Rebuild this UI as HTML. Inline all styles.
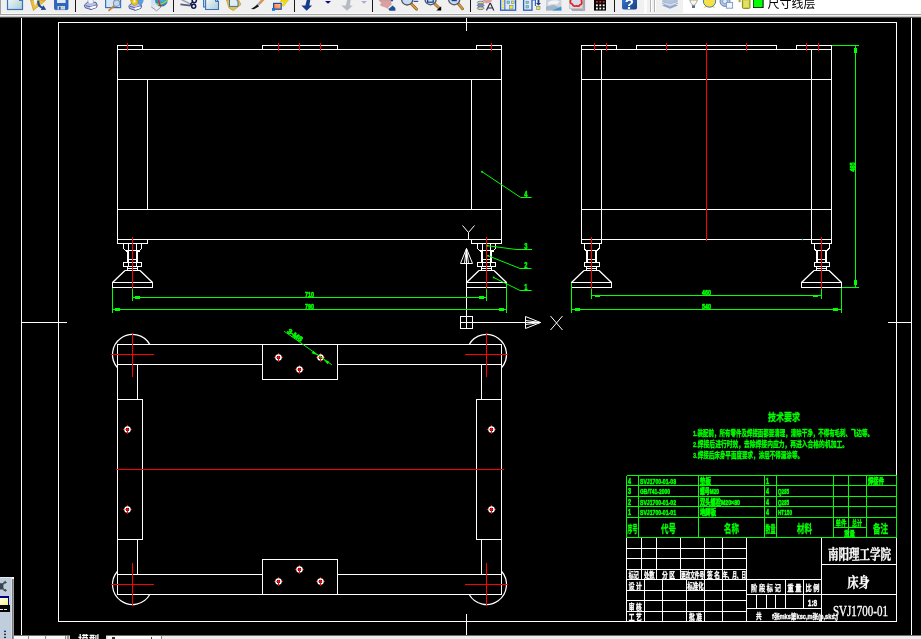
<!DOCTYPE html>
<html lang="zh-CN"><head><meta charset="utf-8"><title>床身 SVJ1700-01</title>
<style>
html,body{margin:0;padding:0;background:#000;overflow:hidden}
body{width:921px;height:639px;position:relative;font-family:"Liberation Sans","Noto Sans CJK SC",sans-serif}
svg{position:absolute;left:0;top:0;display:block}
text{white-space:pre}
</style></head><body>
<svg width="921" height="639" viewBox="0 0 921 639">
<rect width="921" height="639" fill="#000"/>
<g shape-rendering="crispEdges" fill="none">
<line x1="21.5" y1="18" x2="21.5" y2="635" stroke="#fff" stroke-width="1" />
<line x1="911.5" y1="18" x2="911.5" y2="635" stroke="#fff" stroke-width="1" />
<line x1="466.5" y1="18" x2="466.5" y2="31" stroke="#fff" stroke-width="1" />
<line x1="466.5" y1="614" x2="466.5" y2="635" stroke="#fff" stroke-width="1" />
<line x1="21.5" y1="322.5" x2="67" y2="322.5" stroke="#fff" stroke-width="1" />
<line x1="888" y1="322.5" x2="911.5" y2="322.5" stroke="#fff" stroke-width="1" />
<rect x="58.5" y="22.5" width="838.0" height="599.0" stroke="#fff" fill="none"/>
<rect x="117.5" y="49.5" width="384.0" height="190.0" stroke="#fff" fill="none"/>
<line x1="117.5" y1="79.5" x2="501.5" y2="79.5" stroke="#fff" stroke-width="1" />
<line x1="117.5" y1="209.5" x2="501.5" y2="209.5" stroke="#fff" stroke-width="1" />
<line x1="147.5" y1="79.5" x2="147.5" y2="209.5" stroke="#fff" stroke-width="1" />
<line x1="471.5" y1="79.5" x2="471.5" y2="209.5" stroke="#fff" stroke-width="1" />
<polyline points="117.5,49.5 117.5,45.5 142.5,45.5 142.5,49.5" stroke="#fff" fill="none" />
<polyline points="262.5,49.5 262.5,45.5 337.5,45.5 337.5,49.5" stroke="#fff" fill="none" />
<polyline points="476.5,49.5 476.5,45.5 501.5,45.5 501.5,49.5" stroke="#fff" fill="none" />
<line x1="127.5" y1="43" x2="127.5" y2="51" stroke="#f00" stroke-width="1" />
<line x1="278.5" y1="43" x2="278.5" y2="51" stroke="#f00" stroke-width="1" />
<line x1="299.5" y1="43" x2="299.5" y2="51" stroke="#f00" stroke-width="1" />
<line x1="320.5" y1="43" x2="320.5" y2="51" stroke="#f00" stroke-width="1" />
<line x1="491.5" y1="43" x2="491.5" y2="51" stroke="#f00" stroke-width="1" />
<rect x="117.5" y="239.5" width="30.0" height="4.0" stroke="#fff" fill="none"/>
<rect x="471.5" y="239.5" width="30.0" height="4.0" stroke="#fff" fill="none"/>
<polyline points="123.5,243.5 123.5,248.5 125.5,250.5 139.5,250.5 141.5,248.5 141.5,243.5" stroke="#fff" fill="none" />
<line x1="125.5" y1="251.5" x2="128.5" y2="251.5" stroke="#fff" stroke-width="1" />
<line x1="136.5" y1="251.5" x2="139.5" y2="251.5" stroke="#fff" stroke-width="1" />
<line x1="128.5" y1="243.5" x2="128.5" y2="250.5" stroke="#fff" stroke-width="1" />
<line x1="136.5" y1="243.5" x2="136.5" y2="250.5" stroke="#fff" stroke-width="1" />
<line x1="127.5" y1="250.5" x2="127.5" y2="262.5" stroke="#fff" stroke-width="1" />
<line x1="137.5" y1="250.5" x2="137.5" y2="262.5" stroke="#fff" stroke-width="1" />
<line x1="128.5" y1="250.5" x2="128.5" y2="262.5" stroke="#fff" stroke-width="1" />
<line x1="136.5" y1="250.5" x2="136.5" y2="262.5" stroke="#fff" stroke-width="1" />
<line x1="127.5" y1="259.5" x2="137.5" y2="259.5" stroke="#fff" stroke-width="1" />
<rect x="123.5" y="262.5" width="18.0" height="4.0" stroke="#fff" fill="none"/>
<line x1="128.5" y1="262.5" x2="128.5" y2="266.5" stroke="#fff" stroke-width="1" />
<line x1="136.5" y1="262.5" x2="136.5" y2="266.5" stroke="#fff" stroke-width="1" />
<line x1="127.5" y1="266.5" x2="127.5" y2="270.5" stroke="#fff" stroke-width="1" />
<line x1="137.5" y1="266.5" x2="137.5" y2="270.5" stroke="#fff" stroke-width="1" />
<line x1="127.5" y1="268.5" x2="137.5" y2="268.5" stroke="#fff" stroke-width="1" />
<line x1="125.0" y1="270.5" x2="140.0" y2="270.5" stroke="#fff" stroke-width="1" />
<rect x="112.5" y="282.5" width="40.0" height="5.0" stroke="#fff" fill="none"/>
<polyline points="477.5,243.5 477.5,248.5 479.5,250.5 493.5,250.5 495.5,248.5 495.5,243.5" stroke="#fff" fill="none" />
<line x1="479.5" y1="251.5" x2="482.5" y2="251.5" stroke="#fff" stroke-width="1" />
<line x1="490.5" y1="251.5" x2="493.5" y2="251.5" stroke="#fff" stroke-width="1" />
<line x1="482.5" y1="243.5" x2="482.5" y2="250.5" stroke="#fff" stroke-width="1" />
<line x1="490.5" y1="243.5" x2="490.5" y2="250.5" stroke="#fff" stroke-width="1" />
<line x1="481.5" y1="250.5" x2="481.5" y2="262.5" stroke="#fff" stroke-width="1" />
<line x1="491.5" y1="250.5" x2="491.5" y2="262.5" stroke="#fff" stroke-width="1" />
<line x1="482.5" y1="250.5" x2="482.5" y2="262.5" stroke="#fff" stroke-width="1" />
<line x1="490.5" y1="250.5" x2="490.5" y2="262.5" stroke="#fff" stroke-width="1" />
<line x1="481.5" y1="259.5" x2="491.5" y2="259.5" stroke="#fff" stroke-width="1" />
<rect x="477.5" y="262.5" width="18.0" height="4.0" stroke="#fff" fill="none"/>
<line x1="482.5" y1="262.5" x2="482.5" y2="266.5" stroke="#fff" stroke-width="1" />
<line x1="490.5" y1="262.5" x2="490.5" y2="266.5" stroke="#fff" stroke-width="1" />
<line x1="481.5" y1="266.5" x2="481.5" y2="270.5" stroke="#fff" stroke-width="1" />
<line x1="491.5" y1="266.5" x2="491.5" y2="270.5" stroke="#fff" stroke-width="1" />
<line x1="481.5" y1="268.5" x2="491.5" y2="268.5" stroke="#fff" stroke-width="1" />
<line x1="479.0" y1="270.5" x2="494.0" y2="270.5" stroke="#fff" stroke-width="1" />
<rect x="466.5" y="282.5" width="40.0" height="5.0" stroke="#fff" fill="none"/>
<rect x="581.5" y="49.5" width="250.0" height="190.0" stroke="#fff" fill="none"/>
<line x1="581.5" y1="79.5" x2="831.5" y2="79.5" stroke="#fff" stroke-width="1" />
<line x1="581.5" y1="209.5" x2="831.5" y2="209.5" stroke="#fff" stroke-width="1" />
<line x1="601.5" y1="49.5" x2="601.5" y2="239.5" stroke="#fff" stroke-width="1" />
<line x1="811.5" y1="49.5" x2="811.5" y2="239.5" stroke="#fff" stroke-width="1" />
<polyline points="581.5,49.5 581.5,45.5 616.5,45.5 616.5,49.5" stroke="#fff" fill="none" />
<polyline points="636.5,49.5 636.5,45.5 776.5,45.5 776.5,49.5" stroke="#fff" fill="none" />
<polyline points="796.5,49.5 796.5,45.5 831.5,45.5 831.5,49.5" stroke="#fff" fill="none" />
<line x1="594.5" y1="43" x2="594.5" y2="51" stroke="#f00" stroke-width="1" />
<line x1="606.5" y1="43" x2="606.5" y2="51" stroke="#f00" stroke-width="1" />
<line x1="666.5" y1="43" x2="666.5" y2="51" stroke="#f00" stroke-width="1" />
<line x1="746.5" y1="43" x2="746.5" y2="51" stroke="#f00" stroke-width="1" />
<line x1="806.5" y1="43" x2="806.5" y2="51" stroke="#f00" stroke-width="1" />
<line x1="818.5" y1="43" x2="818.5" y2="51" stroke="#f00" stroke-width="1" />
<line x1="706.5" y1="43" x2="706.5" y2="241" stroke="#f00" stroke-width="1" />
<rect x="581.5" y="239.5" width="20.0" height="4.0" stroke="#fff" fill="none"/>
<rect x="811.5" y="239.5" width="20.0" height="4.0" stroke="#fff" fill="none"/>
<polyline points="584.0,243.5 584.0,248.5 586.0,250.5 597.0,250.5 599.0,248.5 599.0,243.5" stroke="#fff" fill="none" />
<line x1="586.0" y1="251.5" x2="587.5" y2="251.5" stroke="#fff" stroke-width="1" />
<line x1="595.5" y1="251.5" x2="597.0" y2="251.5" stroke="#fff" stroke-width="1" />
<line x1="586.5" y1="250.5" x2="586.5" y2="262.5" stroke="#fff" stroke-width="1" />
<line x1="596.5" y1="250.5" x2="596.5" y2="262.5" stroke="#fff" stroke-width="1" />
<line x1="587.5" y1="250.5" x2="587.5" y2="262.5" stroke="#fff" stroke-width="1" />
<line x1="595.5" y1="250.5" x2="595.5" y2="262.5" stroke="#fff" stroke-width="1" />
<line x1="586.5" y1="259.5" x2="596.5" y2="259.5" stroke="#fff" stroke-width="1" />
<rect x="584.0" y="262.5" width="15.0" height="4.0" stroke="#fff" fill="none"/>
<line x1="586.5" y1="266.5" x2="586.5" y2="270.5" stroke="#fff" stroke-width="1" />
<line x1="596.5" y1="266.5" x2="596.5" y2="270.5" stroke="#fff" stroke-width="1" />
<line x1="586.5" y1="268.5" x2="596.5" y2="268.5" stroke="#fff" stroke-width="1" />
<line x1="584.0" y1="270.5" x2="599.0" y2="270.5" stroke="#fff" stroke-width="1" />
<rect x="571.5" y="282.5" width="40.0" height="5.0" stroke="#fff" fill="none"/>
<polyline points="814.0,243.5 814.0,248.5 816.0,250.5 827.0,250.5 829.0,248.5 829.0,243.5" stroke="#fff" fill="none" />
<line x1="816.0" y1="251.5" x2="817.5" y2="251.5" stroke="#fff" stroke-width="1" />
<line x1="825.5" y1="251.5" x2="827.0" y2="251.5" stroke="#fff" stroke-width="1" />
<line x1="816.5" y1="250.5" x2="816.5" y2="262.5" stroke="#fff" stroke-width="1" />
<line x1="826.5" y1="250.5" x2="826.5" y2="262.5" stroke="#fff" stroke-width="1" />
<line x1="817.5" y1="250.5" x2="817.5" y2="262.5" stroke="#fff" stroke-width="1" />
<line x1="825.5" y1="250.5" x2="825.5" y2="262.5" stroke="#fff" stroke-width="1" />
<line x1="816.5" y1="259.5" x2="826.5" y2="259.5" stroke="#fff" stroke-width="1" />
<rect x="814.0" y="262.5" width="15.0" height="4.0" stroke="#fff" fill="none"/>
<line x1="816.5" y1="266.5" x2="816.5" y2="270.5" stroke="#fff" stroke-width="1" />
<line x1="826.5" y1="266.5" x2="826.5" y2="270.5" stroke="#fff" stroke-width="1" />
<line x1="816.5" y1="268.5" x2="826.5" y2="268.5" stroke="#fff" stroke-width="1" />
<line x1="814.0" y1="270.5" x2="829.0" y2="270.5" stroke="#fff" stroke-width="1" />
<rect x="801.5" y="282.5" width="40.0" height="5.0" stroke="#fff" fill="none"/>
<line x1="132.5" y1="237" x2="132.5" y2="289" stroke="#f00" stroke-width="1" />
<line x1="486.5" y1="237" x2="486.5" y2="289" stroke="#f00" stroke-width="1" />
<line x1="591.5" y1="237" x2="591.5" y2="289" stroke="#f00" stroke-width="1" />
<line x1="821.5" y1="237" x2="821.5" y2="289" stroke="#f00" stroke-width="1" />
<rect x="117.5" y="344.5" width="384.0" height="250.0" stroke="#fff" fill="none"/>
<line x1="117.5" y1="364.5" x2="262.5" y2="364.5" stroke="#fff" stroke-width="1" />
<line x1="117.5" y1="574.5" x2="262.5" y2="574.5" stroke="#fff" stroke-width="1" />
<line x1="337.5" y1="364.5" x2="501.5" y2="364.5" stroke="#fff" stroke-width="1" />
<line x1="337.5" y1="574.5" x2="501.5" y2="574.5" stroke="#fff" stroke-width="1" />
<line x1="137.5" y1="364.5" x2="137.5" y2="399.5" stroke="#fff" stroke-width="1" />
<line x1="481.5" y1="364.5" x2="481.5" y2="399.5" stroke="#fff" stroke-width="1" />
<line x1="137.5" y1="539.5" x2="137.5" y2="574.5" stroke="#fff" stroke-width="1" />
<line x1="481.5" y1="539.5" x2="481.5" y2="574.5" stroke="#fff" stroke-width="1" />
<rect x="262.5" y="344.5" width="75.0" height="35.0" stroke="#fff" fill="none"/>
<rect x="262.5" y="559.5" width="75.0" height="35.0" stroke="#fff" fill="none"/>
<rect x="117.5" y="399.5" width="25.0" height="140.0" stroke="#fff" fill="none"/>
<rect x="476.5" y="399.5" width="25.0" height="140.0" stroke="#fff" fill="none"/>
<line x1="116" y1="469.5" x2="504" y2="469.5" stroke="#f00" stroke-width="1" />
</g>
<g fill="none" stroke="#fff" stroke-width="1">
<path d="M125.0 270.5L112.5 282.5M140.0 270.5L152.5 282.5" stroke-width="1.3"/>
<path d="M479.0 270.5L466.5 282.5M494.0 270.5L506.5 282.5" stroke-width="1.3"/>
<path d="M584.0 270.5L571.5 282.5M599.0 270.5L611.5 282.5" stroke-width="1.3"/>
<path d="M814.0 270.5L801.5 282.5M829.0 270.5L841.5 282.5" stroke-width="1.3"/>
<path d="M149.82 344.50A20 20 0 1 0 117.50 367.73" stroke-width="1.25"/>
<path d="M469.18 344.50A20 20 0 1 1 501.50 367.73" stroke-width="1.25"/>
<path d="M149.82 594.50A20 20 0 1 1 117.50 571.27" stroke-width="1.25"/>
<path d="M469.18 594.50A20 20 0 1 0 501.50 571.27" stroke-width="1.25"/>
</g>
<g shape-rendering="crispEdges">
<line x1="274.0" y1="357.5" x2="283.0" y2="357.5" stroke="#f00" stroke-width="1" />
<line x1="278.5" y1="353.0" x2="278.5" y2="362.0" stroke="#f00" stroke-width="1" />
<line x1="295.0" y1="369.5" x2="304.0" y2="369.5" stroke="#f00" stroke-width="1" />
<line x1="299.5" y1="365.0" x2="299.5" y2="374.0" stroke="#f00" stroke-width="1" />
<line x1="316.0" y1="357.5" x2="325.0" y2="357.5" stroke="#f00" stroke-width="1" />
<line x1="320.5" y1="353.0" x2="320.5" y2="362.0" stroke="#f00" stroke-width="1" />
<line x1="274.0" y1="581.5" x2="283.0" y2="581.5" stroke="#f00" stroke-width="1" />
<line x1="278.5" y1="577.0" x2="278.5" y2="586.0" stroke="#f00" stroke-width="1" />
<line x1="295.0" y1="569.5" x2="304.0" y2="569.5" stroke="#f00" stroke-width="1" />
<line x1="299.5" y1="565.0" x2="299.5" y2="574.0" stroke="#f00" stroke-width="1" />
<line x1="316.0" y1="581.5" x2="325.0" y2="581.5" stroke="#f00" stroke-width="1" />
<line x1="320.5" y1="577.0" x2="320.5" y2="586.0" stroke="#f00" stroke-width="1" />
<line x1="123.0" y1="429.5" x2="132.0" y2="429.5" stroke="#f00" stroke-width="1" />
<line x1="127.5" y1="425.0" x2="127.5" y2="434.0" stroke="#f00" stroke-width="1" />
<line x1="123.0" y1="509.5" x2="132.0" y2="509.5" stroke="#f00" stroke-width="1" />
<line x1="127.5" y1="505.0" x2="127.5" y2="514.0" stroke="#f00" stroke-width="1" />
<line x1="487.0" y1="429.5" x2="496.0" y2="429.5" stroke="#f00" stroke-width="1" />
<line x1="491.5" y1="425.0" x2="491.5" y2="434.0" stroke="#f00" stroke-width="1" />
<line x1="487.0" y1="509.5" x2="496.0" y2="509.5" stroke="#f00" stroke-width="1" />
<line x1="491.5" y1="505.0" x2="491.5" y2="514.0" stroke="#f00" stroke-width="1" />
<line x1="111.0" y1="354.5" x2="154.0" y2="354.5" stroke="#f00" stroke-width="1" />
<line x1="132.5" y1="333.0" x2="132.5" y2="376.5" stroke="#f00" stroke-width="1" />
<line x1="465.0" y1="354.5" x2="508.0" y2="354.5" stroke="#f00" stroke-width="1" />
<line x1="486.5" y1="333.0" x2="486.5" y2="376.5" stroke="#f00" stroke-width="1" />
<line x1="111.0" y1="584.5" x2="154.0" y2="584.5" stroke="#f00" stroke-width="1" />
<line x1="132.5" y1="562.5" x2="132.5" y2="605.5" stroke="#f00" stroke-width="1" />
<line x1="465.0" y1="584.5" x2="508.0" y2="584.5" stroke="#f00" stroke-width="1" />
<line x1="486.5" y1="562.5" x2="486.5" y2="605.5" stroke="#f00" stroke-width="1" />
</g>
<g fill="none" stroke="#fff">
<circle cx="278.5" cy="357.5" r="2.5" stroke-width="1.5"/>
<rect x="278.0" y="357.0" width="1" height="5" fill="#f00" stroke="none"/><rect x="276.5" y="357.0" width="2.5" height="1" fill="#f00" stroke="none"/>
<circle cx="299.5" cy="369.5" r="2.5" stroke-width="1.5"/>
<rect x="299.0" y="369.0" width="1" height="5" fill="#f00" stroke="none"/><rect x="297.5" y="369.0" width="2.5" height="1" fill="#f00" stroke="none"/>
<circle cx="320.5" cy="357.5" r="2.5" stroke-width="1.5"/>
<rect x="320.0" y="357.0" width="1" height="5" fill="#f00" stroke="none"/><rect x="318.5" y="357.0" width="2.5" height="1" fill="#f00" stroke="none"/>
<circle cx="278.5" cy="581.5" r="2.5" stroke-width="1.5"/>
<rect x="278.0" y="581.0" width="1" height="5" fill="#f00" stroke="none"/><rect x="276.5" y="581.0" width="2.5" height="1" fill="#f00" stroke="none"/>
<circle cx="299.5" cy="569.5" r="2.5" stroke-width="1.5"/>
<rect x="299.0" y="569.0" width="1" height="5" fill="#f00" stroke="none"/><rect x="297.5" y="569.0" width="2.5" height="1" fill="#f00" stroke="none"/>
<circle cx="320.5" cy="581.5" r="2.5" stroke-width="1.5"/>
<rect x="320.0" y="581.0" width="1" height="5" fill="#f00" stroke="none"/><rect x="318.5" y="581.0" width="2.5" height="1" fill="#f00" stroke="none"/>
<circle cx="127.5" cy="429.5" r="2.5" stroke-width="1.5"/>
<rect x="127.0" y="429.0" width="1" height="5" fill="#f00" stroke="none"/><rect x="125.5" y="429.0" width="2.5" height="1" fill="#f00" stroke="none"/>
<circle cx="127.5" cy="509.5" r="2.5" stroke-width="1.5"/>
<rect x="127.0" y="509.0" width="1" height="5" fill="#f00" stroke="none"/><rect x="125.5" y="509.0" width="2.5" height="1" fill="#f00" stroke="none"/>
<circle cx="491.5" cy="429.5" r="2.5" stroke-width="1.5"/>
<rect x="491.0" y="429.0" width="1" height="5" fill="#f00" stroke="none"/><rect x="489.5" y="429.0" width="2.5" height="1" fill="#f00" stroke="none"/>
<circle cx="491.5" cy="509.5" r="2.5" stroke-width="1.5"/>
<rect x="491.0" y="509.0" width="1" height="5" fill="#f00" stroke="none"/><rect x="489.5" y="509.0" width="2.5" height="1" fill="#f00" stroke="none"/>
</g>
<g shape-rendering="crispEdges" fill="none">
<rect x="460.5" y="316.5" width="12.0" height="12.0" stroke="#fff" fill="none"/>
<line x1="466.5" y1="264" x2="466.5" y2="328.5" stroke="#fff" stroke-width="1" />
<line x1="460.5" y1="322.5" x2="526" y2="322.5" stroke="#fff" stroke-width="1" />
</g>
<g fill="none" stroke="#fff" stroke-width="1">
<path d="M466.5 248.5L460.5 263.5H472.5ZM466.5 248.5L464.5 263.5M466.5 248.5L468.5 263.5M466.5 249V263" />
<path d="M540.5 322.5L525.5 316.5V328.5ZM540.5 322.5L525.5 320.5M540.5 322.5L525.5 324.5M540 322.5H526"/>
<path d="M462.5 225.5L468.5 232.5L474.5 225.5M468.5 232.5V239"/>
<path d="M550.5 316L562.5 330M562.5 316L550.5 330"/>
</g>
<g shape-rendering="crispEdges" fill="none">
<line x1="132.5" y1="297.5" x2="486.5" y2="297.5" stroke="#0f0" stroke-width="1" />
<line x1="132.5" y1="289" x2="132.5" y2="301" stroke="#0f0" stroke-width="1" />
<line x1="486.5" y1="289" x2="486.5" y2="301" stroke="#0f0" stroke-width="1" />
<rect x="135" y="296.0" width="5" height="3" fill="#0f0"/>
<rect x="479" y="296.0" width="5" height="3" fill="#0f0"/>
<line x1="112.5" y1="309.5" x2="506.5" y2="309.5" stroke="#0f0" stroke-width="1" />
<line x1="112.5" y1="288" x2="112.5" y2="313" stroke="#0f0" stroke-width="1" />
<line x1="506.5" y1="282.5" x2="506.5" y2="313" stroke="#0f0" stroke-width="1" />
<rect x="115" y="308.0" width="5" height="3" fill="#0f0"/>
<rect x="499" y="308.0" width="5" height="3" fill="#0f0"/>
<line x1="591.5" y1="295.5" x2="821.5" y2="295.5" stroke="#0f0" stroke-width="1" />
<line x1="591.5" y1="289" x2="591.5" y2="298.5" stroke="#0f0" stroke-width="1" />
<line x1="821.5" y1="289" x2="821.5" y2="298.5" stroke="#0f0" stroke-width="1" />
<rect x="595" y="295.0" width="5" height="2" fill="#0f0"/>
<rect x="813" y="295.0" width="5" height="2" fill="#0f0"/>
<line x1="571.5" y1="309.5" x2="841.5" y2="309.5" stroke="#0f0" stroke-width="1" />
<line x1="571.5" y1="282.5" x2="571.5" y2="313" stroke="#0f0" stroke-width="1" />
<line x1="841.5" y1="287.5" x2="841.5" y2="313" stroke="#0f0" stroke-width="1" />
<rect x="575" y="308.0" width="5" height="3" fill="#0f0"/>
<rect x="833" y="308.0" width="5" height="3" fill="#0f0"/>
<line x1="855.5" y1="45.5" x2="855.5" y2="287.5" stroke="#0f0" stroke-width="1" />
<line x1="831.5" y1="45.5" x2="859" y2="45.5" stroke="#0f0" stroke-width="1" />
<line x1="841.5" y1="287.5" x2="859" y2="287.5" stroke="#0f0" stroke-width="1" />
<rect x="854" y="48" width="3" height="5" fill="#0f0"/><rect x="854" y="280" width="3" height="5" fill="#0f0"/>
</g>
<text x="309.5" y="296.5" font-size="7.5" fill="#0f0" font-family='"Liberation Sans","Noto Sans CJK SC",sans-serif' text-anchor="middle" font-weight="bold" textLength="9" lengthAdjust="spacingAndGlyphs" stroke="#0f0" stroke-width="0.6" >710</text>
<text x="309.5" y="308.5" font-size="7.5" fill="#0f0" font-family='"Liberation Sans","Noto Sans CJK SC",sans-serif' text-anchor="middle" font-weight="bold" textLength="9" lengthAdjust="spacingAndGlyphs" stroke="#0f0" stroke-width="0.6" >790</text>
<text x="706.5" y="294.5" font-size="7.5" fill="#0f0" font-family='"Liberation Sans","Noto Sans CJK SC",sans-serif' text-anchor="middle" font-weight="bold" textLength="9" lengthAdjust="spacingAndGlyphs" stroke="#0f0" stroke-width="0.6" >460</text>
<text x="706.5" y="308.5" font-size="7.5" fill="#0f0" font-family='"Liberation Sans","Noto Sans CJK SC",sans-serif' text-anchor="middle" font-weight="bold" textLength="9" lengthAdjust="spacingAndGlyphs" stroke="#0f0" stroke-width="0.6" >540</text>
<g transform="translate(854.5,167) rotate(-90)">
<text x="0" y="0" font-size="7.5" fill="#0f0" font-family='"Liberation Sans","Noto Sans CJK SC",sans-serif' text-anchor="middle" font-weight="bold" textLength="9" lengthAdjust="spacingAndGlyphs" stroke="#0f0" stroke-width="0.6" >485</text>
</g>
<g fill="none" stroke="#0f0" stroke-width="1">
<path d="M482 171.7L520.7 197.5H531.5"/>
<path d="M487.5 245.7L516.2 249.5H532"/>
<path d="M488 255.7L520 268.5H531.5"/>
<path d="M493.7 277.5L520 290.5H531.5"/>
<path d="M284.3 331.3L331.8 364.7"/>
</g>
<circle cx="482" cy="171.7" r="1" fill="#0f0"/>
<circle cx="487.5" cy="245.7" r="1" fill="#0f0"/>
<circle cx="488" cy="255.7" r="1" fill="#0f0"/>
<circle cx="493.7" cy="277.5" r="1" fill="#0f0"/>
<text x="524.3" y="196.8" font-size="8.5" fill="#0f0" font-family='"Liberation Sans","Noto Sans CJK SC",sans-serif' text-anchor="start" font-weight="bold" textLength="3.2" lengthAdjust="spacingAndGlyphs" stroke="#0f0" stroke-width="0.5" >4</text>
<text x="524.3" y="248.8" font-size="8.5" fill="#0f0" font-family='"Liberation Sans","Noto Sans CJK SC",sans-serif' text-anchor="start" font-weight="bold" textLength="3.2" lengthAdjust="spacingAndGlyphs" stroke="#0f0" stroke-width="0.5" >3</text>
<text x="524.3" y="267.8" font-size="8.5" fill="#0f0" font-family='"Liberation Sans","Noto Sans CJK SC",sans-serif' text-anchor="start" font-weight="bold" textLength="3.2" lengthAdjust="spacingAndGlyphs" stroke="#0f0" stroke-width="0.5" >2</text>
<text x="524.3" y="289.8" font-size="8.5" fill="#0f0" font-family='"Liberation Sans","Noto Sans CJK SC",sans-serif' text-anchor="start" font-weight="bold" textLength="3.2" lengthAdjust="spacingAndGlyphs" stroke="#0f0" stroke-width="0.5" >1</text>
<g transform="translate(286.3,332.7) rotate(35.1)">
<text x="0" y="-0.6" font-size="7" fill="#0f0" font-family='"Liberation Sans","Noto Sans CJK SC",sans-serif' text-anchor="start" font-weight="bold" textLength="17" lengthAdjust="spacingAndGlyphs" stroke="#0f0" stroke-width="0.6" >3-M8</text>
</g>
<polygon points="317.4,355.3 311.6,353.2 313.3,350.8" fill="#0f0" stroke="none" />
<polygon points="323.6,359.7 329.4,361.8 327.7,364.2" fill="#0f0" stroke="none" />
<text x="784" y="421" font-size="10.5" fill="#0f0" font-family='"Liberation Sans","Noto Sans CJK SC",sans-serif' text-anchor="middle" font-weight="bold" textLength="32" lengthAdjust="spacingAndGlyphs" stroke="#0f0" stroke-width="0.35" >技术要求</text>
<text x="693" y="436.2" font-size="8" fill="#0f0" font-family='"Liberation Sans","Noto Sans CJK SC",sans-serif' text-anchor="start" font-weight="bold" textLength="180" lengthAdjust="spacingAndGlyphs" stroke="#0f0" stroke-width="0.35" >1.装配前，所有零件及焊接面都要清理，清除干净，不得有毛刺、飞边等。</text>
<text x="693" y="447" font-size="8" fill="#0f0" font-family='"Liberation Sans","Noto Sans CJK SC",sans-serif' text-anchor="start" font-weight="bold" textLength="155" lengthAdjust="spacingAndGlyphs" stroke="#0f0" stroke-width="0.35" >2.焊接后进行时效，去除焊接内应力，再进入合格的机加工。</text>
<text x="693" y="458" font-size="8" fill="#0f0" font-family='"Liberation Sans","Noto Sans CJK SC",sans-serif' text-anchor="start" font-weight="bold" textLength="110" lengthAdjust="spacingAndGlyphs" stroke="#0f0" stroke-width="0.35" >3.焊接后床身平面度要求，涂层不得漏涂等。</text>
<g shape-rendering="crispEdges" fill="none">
<line x1="626.5" y1="475.5" x2="896.5" y2="475.5" stroke="#0f0" stroke-width="1" />
<line x1="626.5" y1="485.5" x2="896.5" y2="485.5" stroke="#0f0" stroke-width="1" />
<line x1="626.5" y1="496.5" x2="896.5" y2="496.5" stroke="#0f0" stroke-width="1" />
<line x1="626.5" y1="506.5" x2="896.5" y2="506.5" stroke="#0f0" stroke-width="1" />
<line x1="626.5" y1="517.5" x2="896.5" y2="517.5" stroke="#0f0" stroke-width="1" />
<line x1="626.5" y1="537.5" x2="896.5" y2="537.5" stroke="#0f0" stroke-width="1" />
<line x1="626.5" y1="475.5" x2="626.5" y2="537.5" stroke="#0f0" stroke-width="1" />
<line x1="638.5" y1="475.5" x2="638.5" y2="537.5" stroke="#0f0" stroke-width="1" />
<line x1="698.5" y1="475.5" x2="698.5" y2="537.5" stroke="#0f0" stroke-width="1" />
<line x1="764.5" y1="475.5" x2="764.5" y2="537.5" stroke="#0f0" stroke-width="1" />
<line x1="776.5" y1="475.5" x2="776.5" y2="537.5" stroke="#0f0" stroke-width="1" />
<line x1="833.5" y1="475.5" x2="833.5" y2="537.5" stroke="#0f0" stroke-width="1" />
<line x1="848.5" y1="475.5" x2="848.5" y2="537.5" stroke="#0f0" stroke-width="1" />
<line x1="866.5" y1="475.5" x2="866.5" y2="537.5" stroke="#0f0" stroke-width="1" />
<line x1="896.5" y1="475.5" x2="896.5" y2="537.5" stroke="#0f0" stroke-width="1" />
<line x1="833.5" y1="527.5" x2="866.5" y2="527.5" stroke="#0f0" stroke-width="1" />
</g>
<text x="628" y="484.1" font-size="8.5" fill="#0f0" font-family='"Liberation Sans","Noto Sans CJK SC",sans-serif' text-anchor="start" font-weight="bold" textLength="3" lengthAdjust="spacingAndGlyphs" stroke="#0f0" stroke-width="0.6" >4</text>
<text x="640" y="484.1" font-size="8" fill="#0f0" font-family='"Liberation Sans","Noto Sans CJK SC",sans-serif' text-anchor="start" font-weight="bold" textLength="36" lengthAdjust="spacingAndGlyphs" stroke="#0f0" stroke-width="0.6" >SVJ1700-01-03</text>
<text x="700" y="484.1" font-size="7.5" fill="#0f0" font-family='"Liberation Sans","Noto Sans CJK SC",sans-serif' text-anchor="start" font-weight="bold" textLength="11" lengthAdjust="spacingAndGlyphs" stroke="#0f0" stroke-width="0.6" >垫板</text>
<text x="766" y="484.1" font-size="8.5" fill="#0f0" font-family='"Liberation Sans","Noto Sans CJK SC",sans-serif' text-anchor="start" font-weight="bold" textLength="3" lengthAdjust="spacingAndGlyphs" stroke="#0f0" stroke-width="0.6" >1</text>
<text x="868" y="484.1" font-size="7.5" fill="#0f0" font-family='"Liberation Sans","Noto Sans CJK SC",sans-serif' text-anchor="start" font-weight="bold" textLength="16" lengthAdjust="spacingAndGlyphs" stroke="#0f0" stroke-width="0.6" >焊接件</text>
<text x="628" y="494.1" font-size="8.5" fill="#0f0" font-family='"Liberation Sans","Noto Sans CJK SC",sans-serif' text-anchor="start" font-weight="bold" textLength="3" lengthAdjust="spacingAndGlyphs" stroke="#0f0" stroke-width="0.6" >3</text>
<text x="640" y="494.1" font-size="8" fill="#0f0" font-family='"Liberation Sans","Noto Sans CJK SC",sans-serif' text-anchor="start" font-weight="bold" textLength="30" lengthAdjust="spacingAndGlyphs" stroke="#0f0" stroke-width="0.6" >GB/T41-2000</text>
<text x="700" y="494.1" font-size="7.5" fill="#0f0" font-family='"Liberation Sans","Noto Sans CJK SC",sans-serif' text-anchor="start" font-weight="bold" textLength="19" lengthAdjust="spacingAndGlyphs" stroke="#0f0" stroke-width="0.6" >螺母M20</text>
<text x="766" y="494.1" font-size="8.5" fill="#0f0" font-family='"Liberation Sans","Noto Sans CJK SC",sans-serif' text-anchor="start" font-weight="bold" textLength="3" lengthAdjust="spacingAndGlyphs" stroke="#0f0" stroke-width="0.6" >4</text>
<text x="778" y="494.1" font-size="8" fill="#0f0" font-family='"Liberation Sans","Noto Sans CJK SC",sans-serif' text-anchor="start" font-weight="bold" textLength="11" lengthAdjust="spacingAndGlyphs" stroke="#0f0" stroke-width="0.6" >Q235</text>
<text x="628" y="505.1" font-size="8.5" fill="#0f0" font-family='"Liberation Sans","Noto Sans CJK SC",sans-serif' text-anchor="start" font-weight="bold" textLength="3" lengthAdjust="spacingAndGlyphs" stroke="#0f0" stroke-width="0.6" >2</text>
<text x="640" y="505.1" font-size="8" fill="#0f0" font-family='"Liberation Sans","Noto Sans CJK SC",sans-serif' text-anchor="start" font-weight="bold" textLength="36" lengthAdjust="spacingAndGlyphs" stroke="#0f0" stroke-width="0.6" >SVJ1700-01-02</text>
<text x="700" y="505.1" font-size="7.5" fill="#0f0" font-family='"Liberation Sans","Noto Sans CJK SC",sans-serif' text-anchor="start" font-weight="bold" textLength="40" lengthAdjust="spacingAndGlyphs" stroke="#0f0" stroke-width="0.6" >双头螺栓M20×80</text>
<text x="766" y="505.1" font-size="8.5" fill="#0f0" font-family='"Liberation Sans","Noto Sans CJK SC",sans-serif' text-anchor="start" font-weight="bold" textLength="3" lengthAdjust="spacingAndGlyphs" stroke="#0f0" stroke-width="0.6" >4</text>
<text x="778" y="505.1" font-size="8" fill="#0f0" font-family='"Liberation Sans","Noto Sans CJK SC",sans-serif' text-anchor="start" font-weight="bold" textLength="11" lengthAdjust="spacingAndGlyphs" stroke="#0f0" stroke-width="0.6" >Q235</text>
<text x="628" y="515.1" font-size="8.5" fill="#0f0" font-family='"Liberation Sans","Noto Sans CJK SC",sans-serif' text-anchor="start" font-weight="bold" textLength="3" lengthAdjust="spacingAndGlyphs" stroke="#0f0" stroke-width="0.6" >1</text>
<text x="640" y="515.1" font-size="8" fill="#0f0" font-family='"Liberation Sans","Noto Sans CJK SC",sans-serif' text-anchor="start" font-weight="bold" textLength="36" lengthAdjust="spacingAndGlyphs" stroke="#0f0" stroke-width="0.6" >SVJ1700-01-01</text>
<text x="700" y="515.1" font-size="7.5" fill="#0f0" font-family='"Liberation Sans","Noto Sans CJK SC",sans-serif' text-anchor="start" font-weight="bold" textLength="16" lengthAdjust="spacingAndGlyphs" stroke="#0f0" stroke-width="0.6" >地脚板</text>
<text x="766" y="515.1" font-size="8.5" fill="#0f0" font-family='"Liberation Sans","Noto Sans CJK SC",sans-serif' text-anchor="start" font-weight="bold" textLength="3" lengthAdjust="spacingAndGlyphs" stroke="#0f0" stroke-width="0.6" >4</text>
<text x="778" y="515.1" font-size="8" fill="#0f0" font-family='"Liberation Sans","Noto Sans CJK SC",sans-serif' text-anchor="start" font-weight="bold" textLength="14" lengthAdjust="spacingAndGlyphs" stroke="#0f0" stroke-width="0.6" >HT150</text>
<text x="632.5" y="533" font-size="10" fill="#0f0" font-family='"Liberation Sans","Noto Sans CJK SC",sans-serif' text-anchor="middle" font-weight="bold" textLength="10" lengthAdjust="spacingAndGlyphs" stroke="#0f0" stroke-width="0.35" >序号</text>
<text x="668.5" y="533" font-size="11" fill="#0f0" font-family='"Liberation Sans","Noto Sans CJK SC",sans-serif' text-anchor="middle" font-weight="bold" textLength="15" lengthAdjust="spacingAndGlyphs" stroke="#0f0" stroke-width="0.35" >代号</text>
<text x="731.5" y="533" font-size="11" fill="#0f0" font-family='"Liberation Sans","Noto Sans CJK SC",sans-serif' text-anchor="middle" font-weight="bold" textLength="15" lengthAdjust="spacingAndGlyphs" stroke="#0f0" stroke-width="0.35" >名称</text>
<text x="770.5" y="533" font-size="10" fill="#0f0" font-family='"Liberation Sans","Noto Sans CJK SC",sans-serif' text-anchor="middle" font-weight="bold" textLength="10" lengthAdjust="spacingAndGlyphs" stroke="#0f0" stroke-width="0.35" >数量</text>
<text x="804.5" y="533" font-size="11" fill="#0f0" font-family='"Liberation Sans","Noto Sans CJK SC",sans-serif' text-anchor="middle" font-weight="bold" textLength="15" lengthAdjust="spacingAndGlyphs" stroke="#0f0" stroke-width="0.35" >材料</text>
<text x="841" y="526" font-size="7.5" fill="#0f0" font-family='"Liberation Sans","Noto Sans CJK SC",sans-serif' text-anchor="middle" font-weight="bold" textLength="11" lengthAdjust="spacingAndGlyphs" stroke="#0f0" stroke-width="0.35" >单件</text>
<text x="857" y="526" font-size="7.5" fill="#0f0" font-family='"Liberation Sans","Noto Sans CJK SC",sans-serif' text-anchor="middle" font-weight="bold" textLength="10" lengthAdjust="spacingAndGlyphs" stroke="#0f0" stroke-width="0.35" >总计</text>
<text x="849.5" y="535.6" font-size="7.2" fill="#0f0" font-family='"Liberation Sans","Noto Sans CJK SC",sans-serif' text-anchor="middle" font-weight="bold" textLength="11" lengthAdjust="spacingAndGlyphs" stroke="#0f0" stroke-width="0.35" >重量</text>
<text x="880.5" y="533" font-size="11" fill="#0f0" font-family='"Liberation Sans","Noto Sans CJK SC",sans-serif' text-anchor="middle" font-weight="bold" textLength="15" lengthAdjust="spacingAndGlyphs" stroke="#0f0" stroke-width="0.35" >备注</text>
<g shape-rendering="crispEdges" fill="none">
<line x1="626.5" y1="548.5" x2="746.5" y2="548.5" stroke="#fff" stroke-width="1" />
<line x1="626.5" y1="558.5" x2="746.5" y2="558.5" stroke="#fff" stroke-width="1" />
<line x1="626.5" y1="569.5" x2="746.5" y2="569.5" stroke="#fff" stroke-width="1" />
<line x1="626.5" y1="579.5" x2="746.5" y2="579.5" stroke="#fff" stroke-width="1" />
<line x1="626.5" y1="590.5" x2="746.5" y2="590.5" stroke="#fff" stroke-width="1" />
<line x1="626.5" y1="600.5" x2="746.5" y2="600.5" stroke="#fff" stroke-width="1" />
<line x1="626.5" y1="611.5" x2="746.5" y2="611.5" stroke="#fff" stroke-width="1" />
<line x1="626.5" y1="537.5" x2="626.5" y2="621.5" stroke="#fff" stroke-width="1" />
<line x1="641.5" y1="537.5" x2="641.5" y2="579.5" stroke="#fff" stroke-width="1" />
<line x1="656.5" y1="537.5" x2="656.5" y2="579.5" stroke="#fff" stroke-width="1" />
<line x1="680.5" y1="537.5" x2="680.5" y2="579.5" stroke="#fff" stroke-width="1" />
<line x1="644.5" y1="579.5" x2="644.5" y2="621.5" stroke="#fff" stroke-width="1" />
<line x1="662.5" y1="579.5" x2="662.5" y2="621.5" stroke="#fff" stroke-width="1" />
<line x1="686.5" y1="579.5" x2="686.5" y2="621.5" stroke="#fff" stroke-width="1" />
<line x1="704.5" y1="537.5" x2="704.5" y2="621.5" stroke="#fff" stroke-width="1" />
<line x1="722.5" y1="537.5" x2="722.5" y2="621.5" stroke="#fff" stroke-width="1" />
<line x1="746.5" y1="537.5" x2="746.5" y2="621.5" stroke="#fff" stroke-width="1" />
<line x1="746.5" y1="579.5" x2="821.5" y2="579.5" stroke="#fff" stroke-width="1" />
<line x1="746.5" y1="594.5" x2="821.5" y2="594.5" stroke="#fff" stroke-width="1" />
<line x1="746.5" y1="608.5" x2="821.5" y2="608.5" stroke="#fff" stroke-width="1" />
<line x1="785.5" y1="579.5" x2="785.5" y2="608.5" stroke="#fff" stroke-width="1" />
<line x1="803.5" y1="579.5" x2="803.5" y2="608.5" stroke="#fff" stroke-width="1" />
<line x1="756.5" y1="594.5" x2="756.5" y2="608.5" stroke="#fff" stroke-width="1" />
<line x1="766.5" y1="594.5" x2="766.5" y2="608.5" stroke="#fff" stroke-width="1" />
<line x1="775.5" y1="594.5" x2="775.5" y2="608.5" stroke="#fff" stroke-width="1" />
<line x1="821.5" y1="537.5" x2="821.5" y2="621.5" stroke="#fff" stroke-width="1" />
<line x1="821.5" y1="564.5" x2="896.5" y2="564.5" stroke="#fff" stroke-width="1" />
<line x1="821.5" y1="594.5" x2="896.5" y2="594.5" stroke="#fff" stroke-width="1" />
</g>
<text x="633.8" y="578" font-size="7.5" fill="#fff" font-family='"Liberation Sans","Noto Sans CJK SC",sans-serif' text-anchor="middle" font-weight="bold" textLength="10" lengthAdjust="spacingAndGlyphs" stroke="#fff" stroke-width="0.35" >标记</text>
<text x="649.2" y="578" font-size="7.5" fill="#fff" font-family='"Liberation Sans","Noto Sans CJK SC",sans-serif' text-anchor="middle" font-weight="bold" textLength="10.5" lengthAdjust="spacingAndGlyphs" stroke="#fff" stroke-width="0.35" >处数</text>
<text x="668.5" y="578" font-size="7.5" fill="#fff" font-family='"Liberation Sans","Noto Sans CJK SC",sans-serif' text-anchor="middle" font-weight="bold" textLength="13" lengthAdjust="spacingAndGlyphs" stroke="#fff" stroke-width="0.35" >分 区</text>
<text x="692.5" y="578" font-size="7.5" fill="#fff" font-family='"Liberation Sans","Noto Sans CJK SC",sans-serif' text-anchor="middle" font-weight="bold" textLength="23" lengthAdjust="spacingAndGlyphs" stroke="#fff" stroke-width="0.35" >更改文件号</text>
<text x="713.5" y="578" font-size="7.5" fill="#fff" font-family='"Liberation Sans","Noto Sans CJK SC",sans-serif' text-anchor="middle" font-weight="bold" textLength="13" lengthAdjust="spacingAndGlyphs" stroke="#fff" stroke-width="0.35" >签 名</text>
<text x="734.5" y="578" font-size="7.5" fill="#fff" font-family='"Liberation Sans","Noto Sans CJK SC",sans-serif' text-anchor="middle" font-weight="bold" textLength="23" lengthAdjust="spacingAndGlyphs" stroke="#fff" stroke-width="0.35" >年、月、日</text>
<text x="635.3" y="588.8" font-size="7.5" fill="#fff" font-family='"Liberation Sans","Noto Sans CJK SC",sans-serif' text-anchor="middle" font-weight="bold" textLength="13" lengthAdjust="spacingAndGlyphs" stroke="#fff" stroke-width="0.35" >设 计</text>
<text x="695.5" y="588.8" font-size="7.5" fill="#fff" font-family='"Liberation Sans","Noto Sans CJK SC",sans-serif' text-anchor="middle" font-weight="bold" textLength="16" lengthAdjust="spacingAndGlyphs" stroke="#fff" stroke-width="0.35" >标准化</text>
<text x="635.3" y="610" font-size="7.5" fill="#fff" font-family='"Liberation Sans","Noto Sans CJK SC",sans-serif' text-anchor="middle" font-weight="bold" textLength="13" lengthAdjust="spacingAndGlyphs" stroke="#fff" stroke-width="0.35" >审 核</text>
<text x="635.3" y="620.3" font-size="7.5" fill="#fff" font-family='"Liberation Sans","Noto Sans CJK SC",sans-serif' text-anchor="middle" font-weight="bold" textLength="13" lengthAdjust="spacingAndGlyphs" stroke="#fff" stroke-width="0.35" >工 艺</text>
<text x="695.5" y="620.3" font-size="7.5" fill="#fff" font-family='"Liberation Sans","Noto Sans CJK SC",sans-serif' text-anchor="middle" font-weight="bold" textLength="13" lengthAdjust="spacingAndGlyphs" stroke="#fff" stroke-width="0.35" >批 准</text>
<text x="766" y="591" font-size="7.5" fill="#fff" font-family='"Liberation Sans","Noto Sans CJK SC",sans-serif' text-anchor="middle" font-weight="bold" textLength="30" lengthAdjust="spacingAndGlyphs" stroke="#fff" stroke-width="0.35" >阶 段 标 记</text>
<text x="794.5" y="591" font-size="7.5" fill="#fff" font-family='"Liberation Sans","Noto Sans CJK SC",sans-serif' text-anchor="middle" font-weight="bold" textLength="14" lengthAdjust="spacingAndGlyphs" stroke="#fff" stroke-width="0.35" >重 量</text>
<text x="812.5" y="591" font-size="7.5" fill="#fff" font-family='"Liberation Sans","Noto Sans CJK SC",sans-serif' text-anchor="middle" font-weight="bold" textLength="14" lengthAdjust="spacingAndGlyphs" stroke="#fff" stroke-width="0.35" >比 例</text>
<text x="812.5" y="606" font-size="9" fill="#fff" font-family='"Liberation Sans","Noto Sans CJK SC",sans-serif' text-anchor="middle" font-weight="bold" textLength="9.5" lengthAdjust="spacingAndGlyphs" stroke="#fff" stroke-width="0.35" >1:8</text>
<text x="758.7" y="619" font-size="8" fill="#fff" font-family='"Liberation Sans","Noto Sans CJK SC",sans-serif' text-anchor="middle" font-weight="bold" textLength="5.6" lengthAdjust="spacingAndGlyphs" stroke="#fff" stroke-width="0.35" >共</text>
<text x="772" y="619" font-size="7" fill="#fff" font-family='"Liberation Sans","Noto Sans CJK SC",sans-serif' text-anchor="start" font-weight="bold" textLength="66" lengthAdjust="spacingAndGlyphs" stroke="#fff" stroke-width="0.35" >f张mks第ksc,m张(p,sks,)</text>
<text x="859.5" y="558.5" font-size="14" fill="#fff" font-family='"Liberation Serif","Noto Serif CJK SC",serif' text-anchor="middle" font-weight="bold" textLength="63" lengthAdjust="spacingAndGlyphs" stroke="#fff" stroke-width="0.35" >南阳理工学院</text>
<text x="858.5" y="587" font-size="14" fill="#fff" font-family='"Liberation Serif","Noto Serif CJK SC",serif' text-anchor="middle" font-weight="bold" textLength="22" lengthAdjust="spacingAndGlyphs" stroke="#fff" stroke-width="0.35" >床身</text>
<text x="860.5" y="615.5" font-size="15.5" fill="#fff" font-family='"Liberation Serif","Noto Serif CJK SC",serif' text-anchor="middle" font-weight="normal" textLength="55" lengthAdjust="spacingAndGlyphs" stroke="#fff" stroke-width="0.35" >SVJ1700-01</text>
<circle cx="802.5" cy="239.5" r="0.8" fill="#0cc"/>
<defs>
<linearGradient id="gp" x1="0" y1="0" x2="1" y2="1"><stop offset="0" stop-color="#fff"/><stop offset="1" stop-color="#a8ccd6"/></linearGradient>
<linearGradient id="gh" x1="0" y1="0" x2="1" y2="1"><stop offset="0" stop-color="#3f7fd6"/><stop offset="1" stop-color="#163f86"/></linearGradient>
<linearGradient id="go" x1="0" y1="1" x2="1" y2="0"><stop offset="0" stop-color="#ff7326"/><stop offset="1" stop-color="#ffc6a2"/></linearGradient>
<linearGradient id="gy" x1="0" y1="0" x2="0" y2="1"><stop offset="0" stop-color="#fbfbb4"/><stop offset="1" stop-color="#efe66c"/></linearGradient>
<clipPath id="tbclip"><rect x="0" y="0" width="921" height="13"/></clipPath>
</defs>
<g shape-rendering="crispEdges">
<rect x="0" y="0" width="921" height="14" fill="#f0f0f0"/>
<rect x="0" y="13" width="921" height="1" fill="#f8f8f8"/>
<rect x="0" y="14" width="921" height="1" fill="#a4a4a4"/>
<rect x="0" y="15" width="921" height="1" fill="#f0f0f0"/>
<rect x="0" y="16" width="921" height="1" fill="#c4c4c4"/>
<rect x="0" y="17" width="921" height="1" fill="#4c4c4c"/>
<rect x="0" y="0" width="1" height="14" fill="#a0a0a0"/>
<rect x="683" y="0" width="238" height="13" fill="#fff"/>
<rect x="75" y="0" width="1" height="12" fill="#1a1a1a"/>
<rect x="173" y="0" width="1" height="12" fill="#1a1a1a"/>
<rect x="294" y="0" width="1" height="12" fill="#1a1a1a"/>
<rect x="372" y="0" width="1" height="12" fill="#1a1a1a"/>
<rect x="470" y="0" width="1" height="12" fill="#1a1a1a"/>
<rect x="614" y="0" width="1" height="12" fill="#1a1a1a"/>
<rect x="644" y="0" width="3" height="14" fill="#fbfbfb"/>
<rect x="650" y="0" width="1" height="12" fill="#b4b4b4"/><rect x="651" y="0" width="1" height="12" fill="#fff"/>
<rect x="654" y="0" width="1" height="12" fill="#b4b4b4"/><rect x="655" y="0" width="1" height="12" fill="#fff"/>
</g>
<g clip-path="url(#tbclip)">
<rect x="7.5" y="-6" width="15" height="15.5" fill="url(#gp)" stroke="#3a72b8" stroke-width="1.2"/><rect x="19" y="0" width="3.5" height="1" fill="#3a72b8"/>
<path d="M30.5 0L33.4 10.5L36.6 7.6L39.5 6L45.6 0Z" fill="#e9bf3e" stroke="#c39426" stroke-width=".7"/>
<path d="M33.6 0L35 6L38 0Z" fill="#eef4fb"/><path d="M40.5 0L44 2L45.6 0Z" fill="#d9a92e"/>
<path d="M38.2 0.6Q38 6.8 43 7.8" fill="none" stroke="#1d4a94" stroke-width="2.2"/><path d="M40.8 10L46.2 9.8L43.4 5.2Z" fill="#1d4a94"/>
<rect x="54.5" y="-4" width="13.5" height="13.6" rx="1" fill="#2f66c0" stroke="#2456a8" stroke-width=".8"/>
<rect x="57" y="-4" width="8.6" height="7" fill="#dfe9f4"/><rect x="57.5" y="6" width="7.5" height="3.6" fill="#c6d4e8"/><rect x="59" y="6.6" width="1.6" height="3" fill="#2a58a8"/><rect x="62" y="7" width="2" height="1" fill="#d8c870"/>
<g transform="translate(0,0)"><path d="M84.4 5L88 1.8L96 2.4L97.2 5L96.6 7.4L91 9.6L85 7.6Z" fill="#bcc2e2" stroke="#4252a0" stroke-width=".9"/><path d="M87.6 -1H93L93.6 3.4L88.6 4Z" fill="#f2f2fb" stroke="#8890c0" stroke-width=".5"/><path d="M85.6 5.6L91 7L96.4 4.8" fill="none" stroke="#4252a0" stroke-width=".8"/><path d="M89.6 7.2L95.4 5.6L96.4 7.2L91.2 9Z" fill="#fff"/></g>
<rect x="105.6" y="-6" width="15" height="13.6" fill="#d6e6f6" stroke="#3a72b8" stroke-width="1.2"/>
<path d="M114 6L109 10.4" stroke="#cf8433" stroke-width="1.8" stroke-linecap="round"/><circle cx="116.6" cy="3.2" r="3.2" fill="#b8dafa" stroke="#8c92a4" stroke-width="1.1"/>
<g transform="translate(44.4,0.8)"><path d="M84.4 5L88 1.8L96 2.4L97.2 5L96.6 7.4L91 9.6L85 7.6Z" fill="#bcc2e2" stroke="#4252a0" stroke-width=".9"/><path d="M87.6 -1H93L93.6 3.4L88.6 4Z" fill="#f2f2fb" stroke="#8890c0" stroke-width=".5"/><path d="M85.6 5.6L91 7L96.4 4.8" fill="none" stroke="#4252a0" stroke-width=".8"/><path d="M89.6 7.2L95.4 5.6L96.4 7.2L91.2 9Z" fill="#fff"/></g>
<path d="M138 0H143.6Q143.4 4 140 5.4L138 3Z" fill="#5a9cdc"/><path d="M130.6 0H138L137.4 3.6L134.6 5.6L131.6 3.6Z" fill="#ecc81c" stroke="#b08c10" stroke-width=".6"/><rect x="133.4" y="0" width="2" height="2.4" fill="#fff8c0"/>
<defs><linearGradient id="gbx" x1="0" y1="0" x2="1" y2="1"><stop offset="0" stop-color="#c6d8f2"/><stop offset="1" stop-color="#f6f9fd"/></linearGradient><radialGradient id="ggl" cx=".55" cy=".35" r=".7"><stop offset="0" stop-color="#5cc8e6"/><stop offset="1" stop-color="#1670b0"/></radialGradient></defs>
<path d="M151.2 0V6.8L156.6 10.8L161 7V0Z" fill="url(#gbx)"/><path d="M151.2 6.8L156.6 10.8L161 7" fill="none" stroke="#8c8c90" stroke-width=".9"/>
<circle cx="161.4" cy="0.2" r="6.3" fill="url(#ggl)"/><path d="M155.6 3.4Q161 6 167.4 0.4" fill="none" stroke="#c4d822" stroke-width="1.1"/><path d="M158.8 -3Q158 3 161 6.6" fill="none" stroke="#d82222" stroke-width="1.1"/>
<path d="M180.4 4.4L190.6 5.6" stroke="#565c7c" stroke-width="1.6"/><path d="M181.6 -0.4L190.6 4.2" stroke="#9aa0ae" stroke-width="1.5"/>
<circle cx="193.7" cy="6.3" r="2" fill="none" stroke="#12124c" stroke-width="1.5"/><circle cx="194.3" cy="0.6" r="2.1" fill="none" stroke="#12124c" stroke-width="1.5"/><path d="M190 4.6L192.2 5.2M190.4 4L192.6 2" stroke="#12124c" stroke-width="1.3"/>
<rect x="203.6" y="-4" width="10.5" height="11" fill="#d2e2ee" stroke="#3a72b8" stroke-width="1.1"/>
<path d="M205.6 -4V9.5H218.5V1.5L215.5 -1.5Z" fill="url(#gp)" stroke="#3a72b8" stroke-width="1.1"/><path d="M215.5 -1.5V1.5H218.5" fill="none" stroke="#3a72b8" stroke-width="1"/>
<path d="M226.5 0L229 8L233.4 10.6L241 4.4L238.6 0Z" fill="#e8bf3c" stroke="#c49826" stroke-width=".7"/>
<path d="M229.5 -4V6.4H238V1.4L235.6 -1Z" fill="#e0ecf6" stroke="#3a72b8" stroke-width="1"/>
<path d="M263.6 -1L259.5 3.4" stroke="#d8964c" stroke-width="2.6"/><path d="M259.8 3L256.6 6.2" stroke="#a4acb8" stroke-width="2.4"/><path d="M257.6 4.6L251 8.9L254 9.2L258.8 6.4Z" fill="#161616"/>
<path d="M281.4 0H288.4L283.4 6.4L282 5L284.6 2H280Z" fill="#f6e010" stroke="#c8b400" stroke-width=".5"/>
<rect x="273.6" y="3.4" width="7.6" height="5.8" fill="url(#go)" stroke="#1c4ca4" stroke-width="1.2"/><rect x="272" y="8" width="3" height="2.8" fill="#0a78f0"/>
<path d="M307 -1H310.4L309.4 5.4H312.2L306.6 10.8L301.4 5.4H305.4Z" fill="#163c8c"/>
<path d="M325 1H331L328 3.8Z" fill="#0c0c7c"/>
<path d="M347.4 -1H350.8L349.8 5.4H352.8L347 10.8L341.4 5.4H345.8Z" fill="#b6bac2"/>
<path d="M361 1H367L364 3.8Z" fill="#b2aacc"/>
<path d="M379 0L380 1.6L382.4 3L380.2 4.4L381 5.6L384.6 6.8L388.6 8.6L391.4 5.8L390.6 0Z" fill="#d8a0a0" stroke="#c48888" stroke-width=".5"/>
<path d="M388.2 7.4L391.6 4.8L392.6 5.6L389.4 8.6Z" fill="#f4f4f8"/><path d="M389.2 8.4L392.6 5.4L395.4 8V10.8H389.6L388.6 9.4Z" fill="#1c5292"/><path d="M390.4 0H393.4L392 1.8Z" fill="#1c4a90"/>
<path d="M411.0 3.6L416.6 9.2" stroke="#7a5a28" stroke-width="2.8" stroke-linecap="round"/><path d="M411.0 3.6L416.6 9.2" stroke="#e09a34" stroke-width="1.7" stroke-linecap="round"/>
<circle cx="407.2" cy="-0.6" r="5.6" fill="#c6dcf4" stroke="#50545c" stroke-width="1.3"/>
<rect x="413.6" y="0.8" width="4.6" height="1.1" fill="#1c3c90"/>
<path d="M434.40000000000003 3.4000000000000004L438.6 7.4" stroke="#7a5a28" stroke-width="2.8" stroke-linecap="round"/><path d="M434.40000000000003 3.4000000000000004L438.6 7.4" stroke="#e09a34" stroke-width="1.7" stroke-linecap="round"/>
<circle cx="430.6" cy="-0.8" r="5.6" fill="#c6dcf4" stroke="#50545c" stroke-width="1.3"/>
<rect x="427.6" y="-2" width="5.6" height="4.2" fill="none" stroke="#1c3c90" stroke-width="1.2"/><path d="M436.4 10.6H441.2V6.2Z" fill="#000"/>
<path d="M458.0 3.4000000000000004L462.6 8.8" stroke="#7a5a28" stroke-width="2.8" stroke-linecap="round"/><path d="M458.0 3.4000000000000004L462.6 8.8" stroke="#e09a34" stroke-width="1.7" stroke-linecap="round"/>
<circle cx="454.2" cy="-0.8" r="5.6" fill="#c6dcf4" stroke="#50545c" stroke-width="1.3"/>
<rect x="451.6" y="-2" width="5.2" height="3.2" fill="#1c3c90"/>
<path d="M482 0H492L491 2.6L486 3.4Z" fill="#dca0a0"/>
<ellipse cx="480.6" cy="2.6" rx="3.4" ry="1.4" fill="#e8d870" stroke="#4a66a8" stroke-width=".7"/>
<ellipse cx="480.6" cy="5.4" rx="3.4" ry="1.4" fill="#7c94c8" stroke="#4a66a8" stroke-width=".7"/>
<ellipse cx="480.6" cy="8.2" rx="3.4" ry="1.4" fill="#e8d870" stroke="#4a66a8" stroke-width=".7"/>
<path d="M486.4 10.6L489.8 3.6H490.6L493.8 10.6M487.8 8H492.6" fill="none" stroke="#2a3048" stroke-width="1.2"/>
<rect x="500.6" y="-4" width="15" height="14.2" fill="#dde9f9" stroke="#2a5cbc" stroke-width="1.3"/><rect x="504.4" y="-4" width=".9" height="14" fill="#2a5cbc"/>
<rect x="501.8" y="0.6" width="2" height="1.6" fill="#f4de20"/>
<rect x="501.8" y="3.6" width="2" height="1.6" fill="#f4de20"/>
<rect x="501.8" y="6.6" width="2" height="1.6" fill="#f4de20"/>
<rect x="507" y="1" width="2.6" height="2.6" fill="#8cd894" stroke="#4a7ab8" stroke-width=".5"/><rect x="511.4" y="1" width="2.8" height="2.6" fill="#f4e424" stroke="#4a7ab8" stroke-width=".5"/><rect x="509.4" y="5.4" width="3.6" height="3.6" fill="#f4e424" stroke="#4a7ab8" stroke-width=".5"/>
<rect x="523.6" y="-4" width="8.4" height="14.2" fill="#dde9f9" stroke="#2a5cbc" stroke-width="1.3"/><path d="M532 0H535.4V6" fill="none" stroke="#2a5cbc" stroke-width="1.1"/>
<rect x="526" y="1.2" width="2.6" height="2.4" fill="#8cd894" stroke="#4a7ab8" stroke-width=".5"/><rect x="526" y="5.6" width="2.6" height="2.4" fill="#8cd894" stroke="#4a7ab8" stroke-width=".5"/>
<path d="M537.6 -1H539.4V3H541L538.5 5.6L536 3H537.6Z" fill="#1c3c8c"/><rect x="536.6" y="6.2" width="3.4" height="3.4" fill="#f4e424" stroke="#4a7ab8" stroke-width=".5"/>
<path d="M546 0H561.4V10.4H546Z" fill="#ccd2da"/><path d="M548 2.4Q553 -1 559.6 1.2L557 4.6Q552 3.2 548.6 5.4Z" fill="#f2f4f6"/><path d="M546 6.4L554 5L561.4 8.4V10.4H546Z" fill="#9eb6cc"/><path d="M552 10.4L561.4 6.6V10.4Z" fill="#4a90c8"/>
<path d="M571 9.4H583.4V-1M572 10.4H584.6V-1" fill="none" stroke="#8c8c94" stroke-width=".8"/><rect x="569.6" y="-3" width="12.6" height="11.4" fill="#d6deee" stroke="#a4acbc" stroke-width=".6"/>
<path d="M570.8 -0.5Q569.4 3.6 572.4 4.2Q573.4 7 576.4 5.8Q578.8 7 580 4.8Q582.6 4 581.4 1Q582 -1.6 579.6 -2" fill="none" stroke="#e81c1c" stroke-width="1.7"/>
<rect x="594" y="-4" width="12" height="14.6" fill="#080808"/>
<rect x="596" y="1" width="1.8" height="1.6" fill="#f02020"/><rect x="596" y="4.4" width="1.8" height="1.8" fill="#fff"/><rect x="596" y="7.6" width="1.8" height="1.8" fill="#fff"/>
<rect x="599.4" y="1" width="1.8" height="1.6" fill="#f02020"/><rect x="599.4" y="4.4" width="1.8" height="1.8" fill="#fff"/><rect x="599.4" y="7.6" width="1.8" height="1.8" fill="#fff"/>
<rect x="602.8" y="1" width="1.8" height="1.6" fill="#f02020"/><rect x="602.8" y="4.4" width="1.8" height="1.8" fill="#fff"/><rect x="602.8" y="7.6" width="1.8" height="1.8" fill="#fff"/>
<rect x="622" y="-6" width="15" height="15.6" rx="1.8" fill="url(#gh)"/>
<text x="629.4" y="8.8" font-size="15" font-weight="bold" fill="#fff" text-anchor="middle" font-family='"Liberation Sans",sans-serif'>?</text>
<path d="M662 3.4L670 0.4L678 3.4L670 6.4Z" fill="#d6e0f0" stroke="#8ea2c4" stroke-width=".6"/><path d="M662 5.6L670 8.8L678 5.6L675.4 4.6L670 6.6L664.6 4.6Z" fill="#8ea6cc"/><path d="M662 1L670 -2L678 1L670 4Z" fill="#b4c4dc" stroke="#8ea2c4" stroke-width=".5"/>
<path d="M689.8 0Q690 2.4 692 4.4V5.4H695V4.4Q697.2 2.4 697.4 0Z" fill="#fbf7d2" stroke="#8a98b4" stroke-width=".8"/><rect x="692" y="5.4" width="3" height="2.6" fill="#5a70ac"/>
<path d="M703.4 8.4L706 5L713 5L715.6 8.4L712 6.8H707Z" fill="#f2d830"/><circle cx="709.5" cy="1" r="6.2" fill="#f6e244" stroke="#3f78c4" stroke-width="1"/>
<circle cx="725" cy="1.4" r="5" fill="#b0c6e4" stroke="#6484b8" stroke-width="1"/><circle cx="725" cy="1.4" r="2.4" fill="#e4ecf8" stroke="#6484b8" stroke-width=".7"/><rect x="726.4" y="2.4" width="6.2" height="5.8" fill="#f4f8fc" stroke="#7896c8" stroke-width=".9"/>
<rect x="738.6" y="-1" width="2" height="3.2" fill="#a8a820"/><rect x="742.4" y="-1" width="7.6" height="9.4" rx="1.2" fill="#d6d648" stroke="#7c7c14" stroke-width=".9"/><path d="M744 2H748.6M744 4H748.6M744 6H748.6" stroke="#f4f4a0" stroke-width=".8"/>
<rect x="753" y="-2" width="10.6" height="10" fill="#000"/><rect x="753.6" y="-2" width="9" height="9.2" fill="#00ff00"/>
<text x="767.4" y="8" font-size="12" fill="#000" font-family='"Liberation Sans","Noto Sans CJK SC",sans-serif' textLength="48" lengthAdjust="spacingAndGlyphs">尺寸线层</text>
</g>
<defs><linearGradient id="gyy" x1="0" y1="0" x2="1" y2="1"><stop offset="0" stop-color="#ffffee"/><stop offset="1" stop-color="#f6f678"/></linearGradient></defs>
<g shape-rendering="crispEdges">
<rect x="0" y="577" width="14" height="62" fill="#bfcddc"/><rect x="11" y="578" width="1" height="61" fill="#d6dee8"/><rect x="12" y="578" width="1" height="61" fill="#7a7a7a"/><rect x="13" y="578" width="1" height="61" fill="#9c9c9c"/><rect x="0" y="577" width="12" height="1" fill="#e4eaf0"/><rect x="12" y="577" width="2" height="2" fill="#fff"/>
<rect x="0" y="596" width="9" height="9.4" fill="#00008c"/><rect x="0" y="598" width="8" height="7.4" fill="url(#gyy)"/>
<rect x="0" y="605" width="10" height="7" fill="#050505"/><rect x="0" y="609" width="3" height="1" fill="#e8e8e8"/><rect x="4" y="609" width="3" height="1" fill="#e8e8e8"/>
<rect x="4" y="630" width="2" height="1" fill="#6aa2da"/>
<rect x="4" y="631" width="2" height="1" fill="#2c2c62"/>
<rect x="4" y="632" width="2" height="1" fill="#d9c192"/>
<rect x="4" y="633" width="2" height="1" fill="#6aa2da"/>
<rect x="4" y="634" width="2" height="1" fill="#2c2c62"/>
<rect x="4" y="635" width="2" height="1" fill="#d9c192"/>
<rect x="4" y="636" width="2" height="1" fill="#6aa2da"/>
<rect x="4" y="637" width="2" height="1" fill="#2c2c62"/>
<rect x="4" y="638" width="2" height="1" fill="#d9c192"/>
</g>
<path d="M0 583.8H3.3L5.2 582" fill="none" stroke="#3a464e" stroke-width="1.2"/><path d="M0 588.9H3.3L5.2 590.6" fill="none" stroke="#3a464e" stroke-width="1.2"/><rect x="0" y="583.8" width="3.4" height="5.1" fill="#3a464e"/>
<path d="M3.6 582.2H7M5.3 580.8V583.6M3.6 590.4H7M5.3 589V591.8" stroke="#3a464e" stroke-width="1"/><rect x="5.8" y="581" width="1.2" height="1" fill="#e0c8c0"/><rect x="5.8" y="590.8" width="1.2" height="1" fill="#e0c8c0"/>
<g shape-rendering="crispEdges">
<rect x="14" y="635" width="907" height="1" fill="#6c6c6c"/><rect x="14" y="636" width="907" height="3" fill="#ececec"/>
<rect x="14" y="636" width="14" height="3" fill="#f8f8f8"/><rect x="28" y="636" width="1" height="3" fill="#8c8c8c"/>
<rect x="29" y="636" width="16" height="3" fill="#f8f8f8"/><rect x="45" y="636" width="1" height="3" fill="#8c8c8c"/>
<rect x="47" y="636" width="18" height="3" fill="#f8f8f8"/><rect x="65" y="636" width="1" height="3" fill="#8c8c8c"/>
<rect x="67" y="636" width="2" height="3" fill="#9a9a9a"/><rect x="69" y="636" width="1" height="3" fill="#d8d8d8"/><rect x="70" y="635" width="36" height="4" fill="#000"/><rect x="106" y="636" width="1" height="3" fill="#e0e0e0"/>
<rect x="108" y="636" width="53" height="3" fill="#fdfdfd"/><rect x="112" y="637" width="3" height="2" fill="#333"/><rect x="151" y="637" width="1" height="2" fill="#444"/><rect x="161" y="636" width="1" height="3" fill="#888"/>
</g>
<text x="78" y="645.4" font-size="12" fill="#fff" font-weight="bold" font-family='"Liberation Sans","Noto Sans CJK SC",sans-serif' textLength="21.5" lengthAdjust="spacingAndGlyphs">模型</text>
<g style="mix-blend-mode:lighten"><rect x="0" y="300" width="1" height="1" fill="#000"/></g>
</svg>
</body></html>
